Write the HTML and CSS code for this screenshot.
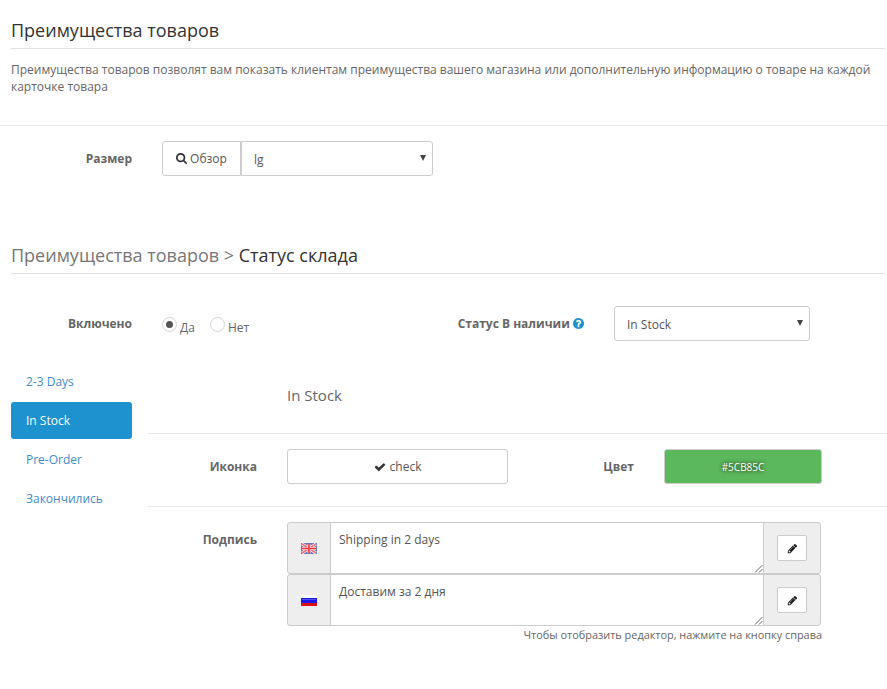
FILE: index.html
```html
<!DOCTYPE html>
<html lang="ru">
<head>
<meta charset="utf-8">
<title>Преимущества товаров</title>
<link rel="stylesheet" href="styles.css">
</head>
<body>
<main>
  <h1 class="heading first">Преимущества товаров</h1>
  <p class="intro">Преимущества товаров позволят вам показать клиентам преимущества вашего магазина или дополнительную информацию о товаре на каждой карточке товара</p>

  <section class="row size-row">
    <span class="label">Размер</span>
    <div class="size-group">
      <button class="btn browse"><svg class="icon" viewBox="0 0 1664 1664"><path d="M1152 704q0-185-131.500-316.500t-316.500-131.500-316.500 131.500-131.500 316.500 131.500 316.500 316.500 131.500 316.500-131.500 131.500-316.500zm512 832q0 52-38 90t-90 38q-54 0-90-38l-343-342q-179 124-399 124-143 0-273.500-55.500t-225-150-150-225-55.500-273.500 55.500-273.500 150-225 225-150 273.500-55.500 273.500 55.500 225 150 150 225 55.500 273.500q0 220-124 399l343 343q37 37 37 90z"/></svg><span>Обзор</span></button>
      <div class="select joined"><span>lg</span><i class="arrow"></i></div>
    </div>
  </section>

  <h2 class="heading second"><span class="crumb">Преимущества товаров &gt;</span> Статус склада</h2>

  <section class="row status-row">
    <span class="label">Включено</span>
    <div class="radios">
      <span class="radio on"></span><span class="radio-text yes">Да</span>
      <span class="radio"></span><span class="radio-text">Нет</span>
    </div>
    <span class="label stock-label">Статус В наличии <svg class="help" viewBox="0 0 1536 1536"><path d="M896 1248v-192q0-14-9-23t-23-9h-192q-14 0-23 9t-9 23v192q0 14 9 23t23 9h192q14 0 23-9t9-23zm256-672q0-88-55.500-163t-138.500-116-170-41q-243 0-371 213-15 24 8 42l132 100q7 6 19 6 16 0 25-12 53-68 86-92 34-24 86-24 48 0 85.500 26t37.500 59q0 38-20 61t-68 45q-63 28-115.500 86.500t-52.500 125.500v36q0 14 9 23t23 9h192q14 0 23-9t9-23q0-19 21.500-49.500t54.500-49.500q32-18 49-28.500t46-35 44.500-48 28-60.500 12.500-81zm384 192q0 209-103 385.500t-279.500 279.500-385.500 103-385.500-103-279.500-279.500-103-385.500 103-385.500 279.500-279.500 385.500-103 385.500 103 279.500 279.500 103 385.500z"/></svg></span>
    <div class="select stock-select"><span>In Stock</span><i class="arrow"></i></div>
  </section>

  <div class="columns">
    <nav class="tabs">
      <a>2-3 Days</a>
      <a class="active">In Stock</a>
      <a>Pre-Order</a>
      <a>Закончились</a>
    </nav>
    <div class="pane">
      <h3 class="pane-title">In Stock</h3>
      <section class="row icon-row">
        <span class="label">Иконка</span>
        <button class="btn check"><svg class="icon" viewBox="0 0 1792 1792"><path d="M1671 566q0 40-28 68l-724 724-136 136q-28 28-68 28t-68-28l-136-136-362-362q-28-28-28-68t28-68l136-136q28-28 68-28t68 28l294 295 656-657q28-28 68-28t68 28l136 136q28 28 28 68z"/></svg><span>check</span></button>
        <span class="label color-label">Цвет</span>
        <div class="color">#5CB85C</div>
      </section>
      <section class="row caption-row">
        <span class="label">Подпись</span>
        <div class="captions">
          <div class="caption">
            <span class="addon flag"><svg width="16" height="11" viewBox="0 0 16 11"><rect width="16" height="11" fill="#7476b4"/><path d="M1 1l14 9M15 1L1 10" stroke="#fff" stroke-width="3"/><path d="M1 1l14 9M15 1L1 10" stroke="#f0707a" stroke-width="1.500"/><path d="M8 1v9M1 5.500h14" stroke="#fbdcdf" stroke-width="3"/><path d="M8 1v9M1 5.500h14" stroke="#f5373c" stroke-width="1.600"/></svg></span>
            <div class="text">Shipping in 2 days<svg class="grip" viewBox="0 0 9 9"><path d="M1 8.500L8.500 1M5 8.500L8.500 5"/></svg></div>
            <span class="addon edit"><button class="btn pencil"><svg viewBox="0 0 1792 1792"><path d="M491 1536l91-91-235-235-91 91v107h128v128h107zm523-928q0-22-22-22-10 0-17 7l-542 542q-7 7-7 17 0 22 22 22 10 0 17-7l542-542q7-7 7-17zm-54-192l416 416-832 832h-416v-416zm683 96q0 53-37 90l-166 166-416-416 166-165q36-38 90-38 53 0 91 38l235 234q37 39 37 91z"/></svg></button></span>
          </div>
          <div class="caption">
            <span class="addon flag"><svg width="16" height="11" viewBox="0 0 16 11"><rect width="16" height="11" fill="#f8f8fa"/><rect y="3" width="16" height="5" fill="#1c18e4"/><rect y="4" x="1" width="14" height="1" fill="#5150f4"/><rect y="8" width="16" height="3" fill="#dc0d13"/></svg></span>
            <div class="text">Доставим за 2 дня<svg class="grip" viewBox="0 0 9 9"><path d="M1 8.500L8.500 1M5 8.500L8.500 5"/></svg></div>
            <span class="addon edit"><button class="btn pencil"><svg viewBox="0 0 1792 1792"><path d="M491 1536l91-91-235-235-91 91v107h128v128h107zm523-928q0-22-22-22-10 0-17 7l-542 542q-7 7-7 17 0 22 22 22 10 0 17-7l542-542q7-7 7-17zm-54-192l416 416-832 832h-416v-416zm683 96q0 53-37 90l-166 166-416-416 166-165q36-38 90-38 53 0 91 38l235 234q37 39 37 91z"/></svg></button></span>
          </div>
          <p class="hint">Чтобы отобразить редактор, нажмите на кнопку справа</p>
        </div>
      </section>
    </div>
  </div>
</main>
</body>
</html>
```
FILE: styles.css
```css
* { box-sizing: border-box; }
body {
  margin: 0;
  background: #fff;
  color: #666;
  font: 12px/17px "Open Sans", sans-serif;
  overflow: hidden;
}
main { width: 887px; height: 689px; overflow: hidden; }
.heading {
  margin: 0 2px 0 11px;
  border-bottom: 1px solid #e0e0e0;
  color: #333;
  font-size: 18px;
  font-weight: 400;
  line-height: 24px;
}
.first { padding-top: 18px; height: 49px; }
.second { padding-top: 1px; height: 32px; }
.crumb { color: #777; }
.intro { margin: 0; padding: 12px 11px 0; height: 76px; }
.row { display: flex; }
.label {
  flex: none;
  color: #666;
  font-weight: 700;
  text-align: right;
}
.btn {
  display: flex;
  align-items: center;
  justify-content: center;
  padding: 0;
  border: 1px solid #ccc;
  border-radius: 3px;
  background: #fff;
  color: #555;
  font: inherit;
}
.icon { width: 12px; height: 12px; margin-right: 3px; fill: #333; }

.size-row { height: 117px; padding-top: 15px; border-top: 1px solid #e9e9e9; }
.size-row .label { width: 132px; margin-right: 30px; padding-top: 9px; }
.size-group { display: flex; width: 271px; height: 35px; }
.browse { width: 79px; border-radius: 3px 0 0 3px; }
.browse .icon { width: 11px; height: 11px; }
.select {
  display: flex;
  justify-content: space-between;
  height: 35px;
  padding: 9px 6px 0 12px;
  border: 1px solid #ccc;
  border-radius: 3px;
  color: #555;
}
.joined { flex: 1; border-radius: 0 3px 3px 0; }
.arrow {
  width: 6px;
  height: 6px;
  margin-top: 4px;
  background: #444;
  clip-path: polygon(0 0, 100% 0, 50% 100%);
}

.status-row { height: 89px; padding-top: 32px; }
.status-row .label { width: 132px; padding-top: 9px; }
.radios { display: flex; width: 295px; padding: 11px 0 0 30px; }
.radio {
  display: flex;
  align-items: center;
  justify-content: center;
  width: 15px;
  height: 15px;
  border: 1px solid #d5d5d5;
  border-radius: 50%;
}
.on::before { content: ""; width: 7px; height: 7px; border-radius: 50%; background: #555; }
.radio-text { padding: 2px 0 0 3px; }
.yes { width: 33px; }
.status-row .stock-label { width: 157px; margin-right: 30px; }
.help { width: 11px; height: 11px; fill: #1e91cf; vertical-align: -1px; }
.stock-select { width: 196px; }

.columns { display: flex; align-items: flex-start; }
.tabs { display: flex; flex: none; flex-direction: column; gap: 2px; width: 121px; margin-left: 11px; }
.tabs a { height: 37px; padding: 10px 15px; border-radius: 3px; color: #428bca; }
.tabs .active { background: #1e91cf; color: #fff; }
.pane { width: 739px; margin-left: 16px; }
.pane-title { height: 70px; margin: 0; padding: 22px 0 0 139px; font-size: 15px; font-weight: 400; line-height: 20px; }
.pane .label { width: 109px; margin-right: 30px; padding-top: 9px; }
.icon-row { height: 73px; padding-top: 15px; border-top: 1px solid #e9e9e9; }
.check { width: 221px; height: 35px; }
.check .icon { margin-right: 4px; }
.pane .color-label { width: 126px; }
.color {
  width: 158px;
  height: 35px;
  border: 1px solid #ccc;
  border-radius: 3px;
  background: #5cb85c;
  color: #fff;
  font-size: 10px;
  line-height: 35px;
  text-align: center;
  text-shadow: 0 0 4px #000;
}
.caption-row { padding-top: 15px; border-top: 1px solid #e9e9e9; }
.captions { width: 535px; }
.caption { display: flex; width: 534px; height: 52px; border: 1px solid #ccc; border-radius: 3px; background: #eee; }
.addon { display: flex; align-items: center; justify-content: center; }
.flag { width: 42px; padding-top: 1px; }
.edit { width: 56px; }
.text {
  position: relative;
  flex: 1;
  padding: 8px;
  border: solid #ccc;
  border-width: 0 1px;
  background: #fff;
  color: #555;
}
.grip { position: absolute; right: 0; bottom: 0; width: 9px; height: 9px; fill: none; stroke: #666; stroke-width: 1; }
.pencil { width: 30px; height: 26px; border-radius: 2px; }
.pencil svg { width: 11px; height: 11px; fill: #222; }
.hint { margin: 0; text-align: right; white-space: nowrap; font-size: 10.92px; }
```
